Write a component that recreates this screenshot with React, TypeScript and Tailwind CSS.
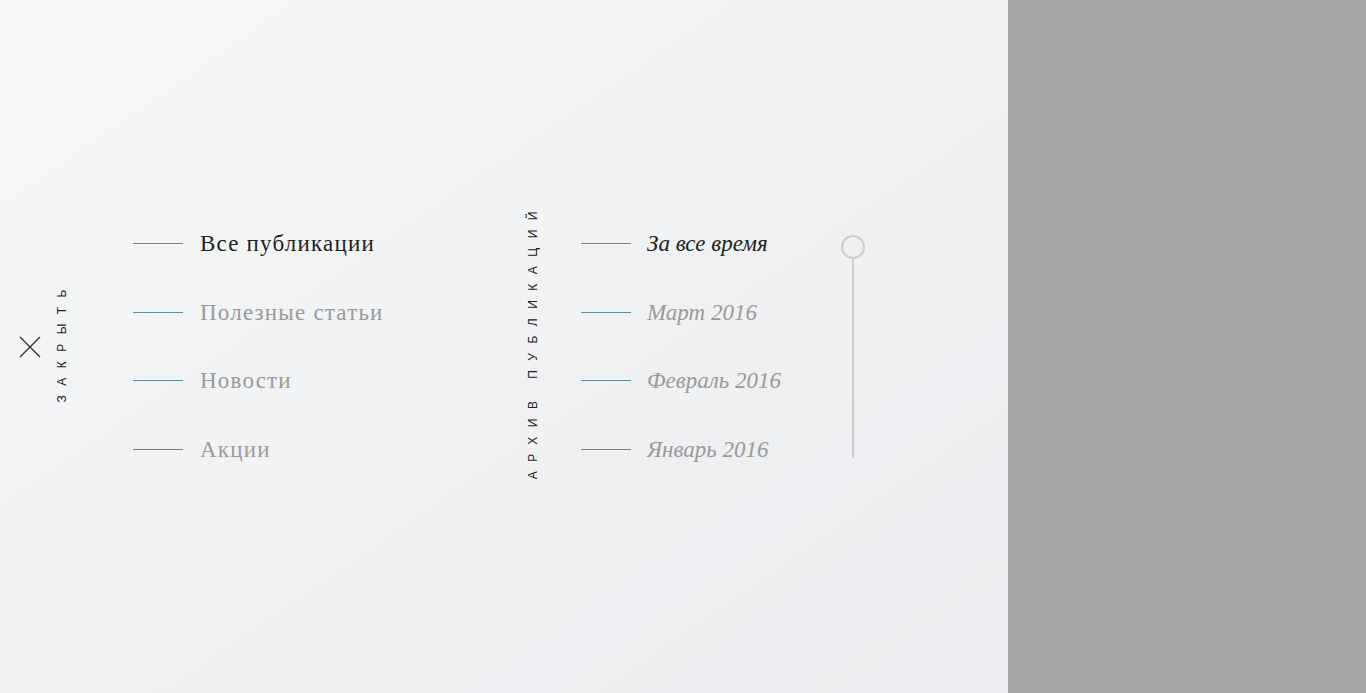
const categories = [
  { label: 'Все публикации', active: true },
  { label: 'Полезные статьи', active: false },
  { label: 'Новости', active: false },
  { label: 'Акции', active: false },
];

const periods = [
  { label: 'За все время', active: true },
  { label: 'Март 2016', active: false },
  { label: 'Февраль 2016', active: false },
  { label: 'Январь 2016', active: false },
];

function VerticalLabel({ text }: { text: string }) {
  return (
    <span className="flex w-[16px] justify-center">
      <span className="rotate-180 pt-[11px] font-['Liberation_Sans',Arial,sans-serif] text-[12px] leading-none tracking-[9.5px] text-[#222] uppercase [writing-mode:vertical-rl]">
        {text}
      </span>
    </span>
  );
}

function MenuList({
  items,
  italic,
  width,
}: {
  items: { label: string; active: boolean }[];
  italic?: boolean;
  width: string;
}) {
  return (
    <ul className={`flex flex-col ${width}`}>
      {items.map((item) => (
        <li key={item.label} className="flex h-[68.67px] items-center">
          <span className="h-px w-[50px] bg-[#5f8c9c]" />
          <span
            className={`font-['Liberation_Serif','Times_New_Roman',serif] text-[23px] leading-none ${
              italic ? 'ml-[16px] italic tracking-[0px]' : 'ml-[17px] tracking-[1.2px]'
            } ${item.active ? 'text-[#1f1f1f]' : 'text-[#9a9a9a]'}`}
          >
            {item.label}
          </span>
        </li>
      ))}
    </ul>
  );
}

export default function App() {
  return (
    <div className="flex h-[693px] w-[1366px] overflow-hidden">
      <div className="flex w-[1008px] items-center bg-linear-to-br from-[#f6f7f7] to-[#ebecef] pl-[19px]">
        {/* закрыть */}
        <button className="flex h-[22px] w-[22px] items-center justify-center">
          <svg width="22" height="22" viewBox="0 0 22 22" fill="none">
            <path d="M1 1L21 21M21 1L1 21" stroke="#2d2d2d" strokeWidth="1.2" />
          </svg>
        </button>
        <span className="ml-[13px]">
          <VerticalLabel text="Закрыть" />
        </span>

        <div className="ml-[63px]">
          <MenuList items={categories} width="w-[392px]" />
        </div>

        <VerticalLabel text="Архив публикаций" />

        <div className="ml-[40px]">
          <MenuList items={periods} italic width="w-[260px]" />
        </div>

        {/* ползунок */}
        <div className="flex flex-col items-center">
          <span className="h-[24px] w-[24px] rounded-full border-2 border-[#cfcfcf]" />
          <span className="h-[199px] w-[2px] bg-[#cfcfcf]" />
        </div>
      </div>
      <div className="flex-1 bg-[#a6a6a6]" />
    </div>
  );
}
